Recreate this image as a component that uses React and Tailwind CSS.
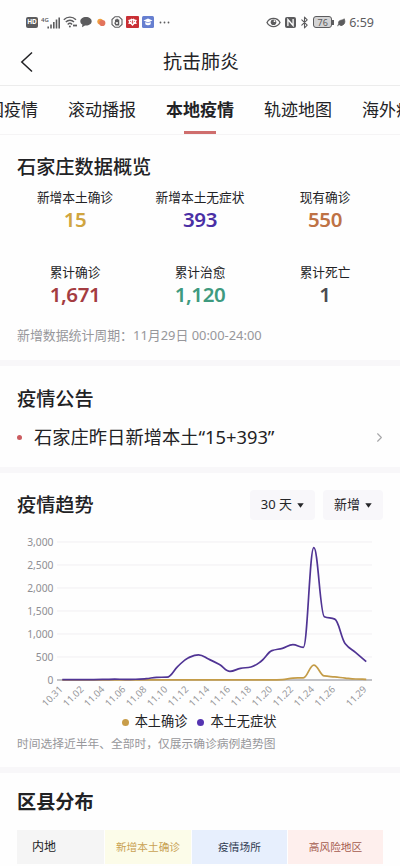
import React from 'react';
import { Bluetooth, Leaf, ChevronRight } from 'lucide-react';

const tabs = ['全国疫情', '滚动播报', '本地疫情', '轨迹地图', '海外疫情'];

const stats = [
  { label: '新增本土确诊', value: '15', color: 'text-[#d0a53f]' },
  { label: '新增本土无症状', value: '393', color: 'text-[#4a2fa5]' },
  { label: '现有确诊', value: '550', color: 'text-[#be7245]' },
  { label: '累计确诊', value: '1,671', color: 'text-[#a43c41]' },
  { label: '累计治愈', value: '1,120', color: 'text-[#3f9a7f]' },
  { label: '累计死亡', value: '1', color: 'text-[#4b4b50]' },
];

const asymptomatic = [
  8, 9, 10, 10, 12, 18, 15, 16, 28, 58, 62, 290, 480, 548, 450, 335, 188, 254,
  283, 413, 638, 688, 768, 710, 2877, 1377, 1323, 790, 594, 400,
];
const confirmed = [
  2, 2, 2, 2, 2, 2, 2, 2, 3, 3, 3, 3, 3, 3, 3, 3, 3, 3, 3, 3, 3, 8, 42, 48,
  325, 88, 68, 42, 22, 15,
];

const xLabels = [
  [0, '10.31'], [2, '11.02'], [4, '11.04'], [6, '11.06'], [8, '11.08'],
  [10, '11.10'], [12, '11.12'], [14, '11.14'], [16, '11.16'], [18, '11.18'],
  [20, '11.20'], [22, '11.22'], [24, '11.24'], [26, '11.26'], [29, '11.29'],
];
const yLabels = ['3,000', '2,500', '2,000', '1,500', '1,000', '500', '0'];

const px = (i) => 62.3 + i * 10.48;
const py = (v) => 150 - v * 0.046;

// monotone cubic, so the curve never overshoots a data point
const linePath = (data) => {
  const n = data.length;
  const d = data.slice(1).map((v, i) => v - data[i]);
  const m = data.map((_, i) => {
    if (i === 0) return d[0];
    if (i === n - 1) return d[n - 2];
    const a = d[i - 1];
    const b = d[i];
    return a * b <= 0 ? 0 : (2 * a * b) / (a + b);
  });
  let p = `M${px(0)},${py(data[0])}`;
  for (let i = 0; i < n - 1; i++) {
    p += `C${px(i + 0.4)},${py(data[i] + m[i] * 0.4)} ${px(i + 0.6)},${py(data[i + 1] - m[i + 1] * 0.4)} ${px(i + 1)},${py(data[i + 1])}`;
  }
  return p;
};

const StatusBar = () => (
  <div className="flex h-11 items-center justify-between pr-[26px] pl-[26px] text-[#5c5c5e]">
    <div className="flex items-center">
      <span className="flex h-[11px] w-[12px] items-center justify-center rounded-[2px] bg-[#5c5c5e] text-[6.5px] font-bold text-white">HD</span>
      <svg width="19" height="13" viewBox="0 0 19 13" className="ml-[3px]">
        <text x="0" y="5.5" fontSize="6" fontWeight="600" fill="#5c5c5e">4G</text>
        <path d="M7.2 12.5v-2M10 12.5v-4M12.8 12.5V6M15.5 12.5v-9M18.2 12.5v-11" stroke="#5c5c5e" strokeWidth="1.6" />
      </svg>
      <svg width="15" height="12" viewBox="0 0 15 12" className="ml-[3px]" fill="none" stroke="#5c5c5e" strokeWidth="1.4">
        <path d="M.8 3.7C4.300.3 9.500.3 13 3.700M2.800 6.100c2.400-2.400 5.900-2.400 8.200 0M4.700 8.400c1.300-1.300 3.100-1.300 4.400 0" />
        <circle cx="6.9" cy="10.4" r="1" fill="#5c5c5e" stroke="none" />
        <path d="M10 9.500h4" strokeWidth="1.8" />
      </svg>
      <svg width="12" height="12" viewBox="0 0 12 12" className="ml-[2px]" fill="#5c5c5e">
        <path d="M6 1C2.700 1 .3 2.900.3 5.300c0 1.400.8 2.600 2.100 3.300L2 11.300l3-1.800 1 .1c3.300 0 5.700-1.900 5.700-4.300S9.300 1 6 1z" />
      </svg>
      <svg width="9" height="9" viewBox="0 0 9 9" className="ml-[5px]">
        <circle cx="3.2" cy="3.6" r="2.9" fill="#f0a040" />
        <circle cx="5.3" cy="5" r="3.1" fill="#e2735c" />
      </svg>
      <svg width="12" height="12" viewBox="0 0 12 12" className="ml-[5px]" fill="none" stroke="#5c5c5e" strokeWidth="1.1">
        <path d="M4 .7h4L11 3.500v5L8 11.300H4L1 8.500v-5z" />
        <path d="M3.700 6.500 5 8.800h2.500V3.500M4.700 6.500v-3M6.100 6V2.700" strokeWidth="1.5" />
      </svg>
      <svg width="13" height="12" viewBox="0 0 13 12" className="ml-[3px]">
        <rect width="13" height="12" rx="1" fill="#c92f35" />
        <path d="m6.500 10-1.900-1.900-2.500-.3 1-1.900-1-2 2.200-.3 1.100-1.200 1.100.9 1.100-.9 1.100 1.200 2.200.3-1 2 1 1.900-2.500.3z" fill="#fff" />
        <path d="M6.500 4.300v3.500M4.100 5.200l1.300.8M8.900 5.200l-1.300.8" stroke="#c92f35" strokeWidth=".8" />
      </svg>
      <svg width="12" height="12" viewBox="0 0 12 12" className="ml-[3px]">
        <rect width="12" height="12" rx="1.5" fill="#667fd0" />
        <path d="m6 2.500 4.500 2L6 6.500l-4.500-2zM3.300 6v2.300c1.500 1.200 3.900 1.200 5.400 0V6L6 7.200z" fill="#fff" />
      </svg>
      <svg width="11" height="3" viewBox="0 0 11 3" className="ml-[5px]" fill="#5c5c5e">
        <circle cx="1.5" cy="1.5" r=".9" />
        <circle cx="5.5" cy="1.5" r=".9" />
        <circle cx="9.5" cy="1.5" r=".9" />
      </svg>
    </div>

    <div className="flex items-center">
      <svg width="15" height="11" viewBox="0 0 15 11" fill="none" stroke="#5c5c5e" strokeWidth="1.3">
        <path d="M1 5.500C3.800 0 11.200 0 14 5.500 11.200 11 3.800 11 1 5.500z" />
        <circle cx="7.5" cy="5.2" r="2.8" fill="#5c5c5e" stroke="none" />
        <circle cx="8.5" cy="4.2" r=".9" fill="#fff" stroke="none" />
      </svg>
      <svg width="11" height="11" viewBox="0 0 11 11" className="ml-[4px]">
        <rect width="11" height="11" rx="2" fill="#5c5c5e" />
        <path d="M2.900 9V2.500l5.200 6V2" fill="none" stroke="#fff" strokeWidth="1.3" />
      </svg>
      <Bluetooth size={13} strokeWidth={2} className="ml-[2px]" />
      <span className="ml-[2px] flex h-[12px] w-[19px] items-center justify-center rounded-[3px] border border-[#5c5c5e] bg-[#d4d4d5] text-[9px] leading-none">76</span>
      <span className="h-[5px] w-[2px] bg-[#5c5c5e]" />
      <Leaf size={9} fill="currentColor" className="ml-[3px]" />
      <span className="ml-[3px] pt-[2px] text-[12.5px] leading-none">6:59</span>
    </div>
  </div>
);

const TrendChart = () => (
  <svg width="400" height="182" viewBox="0 0 400 182" className="block">
    {yLabels.map((t, i) => (
      <g key={t}>
        <line x1="57" x2="372" y1={12 + i * 23} y2={12 + i * 23} stroke={t === '0' ? '#85858c' : '#f1eff2'} />
        <text x="53.5" y={16 + i * 23} textAnchor="end" fontSize="10.3" fill="#8e8e93">{t}</text>
      </g>
    ))}
    {xLabels.map(([i, t]) => (
      <text
        key={t}
        x={px(i) + 1}
        y="160"
        textAnchor="end"
        fontSize="9.5"
        fill="#97979b"
        transform={`rotate(-45 ${px(i) + 1} 160)`}
      >
        {t}
      </text>
    ))}
    <path d={linePath(confirmed)} fill="none" stroke="#c49c48" strokeWidth="1.7" />
    <path d={linePath(asymptomatic)} fill="none" stroke="#503494" strokeWidth="1.7" />
  </svg>
);

const Picker = ({ label, width }) => (
  <button className={`flex h-[30px] items-center justify-center gap-[5px] rounded bg-[#f8f7fa] text-[13px] text-[#252528] ${width}`}>
    {label}
    <svg width="7" height="5" viewBox="0 0 7 5"><path d="M.3.3h6.400L3.500 4.800z" fill="#252528" /></svg>
  </button>
);

const Divider = () => <div className="h-[6px] bg-[#f8f7f9]" />;

export default function App() {
  return (
    <div className="h-[866px] w-[400px] overflow-hidden bg-[#fefefe] font-['Noto_Sans','Noto_Sans_CJK_SC',sans-serif] text-[#222225]">
      <StatusBar />

      {/* Title bar */}
      <header className="grid h-[42px] grid-cols-[60px_1fr_60px] items-center border-b border-[#ececec] pb-[5px]">
        <svg width="13" height="22" viewBox="0 0 13 22" className="ml-5" fill="none" stroke="#222225" strokeWidth="1.5">
          <path d="M12 1.500 1.800 11 12 20.500" />
        </svg>
        <h1 className="pt-px pl-[2px] text-center text-[19px] leading-none">抗击肺炎</h1>
      </header>

      {/* Tabs */}
      <nav className="flex h-[49px] gap-[30px] border-b border-[#f5f4f5] pt-[13px]">
        {tabs.map((t, i) => (
          <div
            key={t}
            className={`flex w-[68px] shrink-0 flex-col items-center justify-between text-[17px] leading-[21px] whitespace-nowrap ${i === 0 ? '-ml-[30px]' : ''} ${i === 2 ? 'font-bold' : ''}`}
          >
            <span>{t}</span>
            {i === 2 && <span className="h-[3px] w-8 bg-[#cf6e6d]" />}
          </div>
        ))}
      </nav>

      {/* Overview */}
      <section className="h-[225px] pt-[20px]">
        <h2 className="pl-[17px] text-[19.2px] leading-6 font-medium">石家庄数据概览</h2>
        <div className="mt-[8px] grid grid-cols-3 px-[12.5px]">
          {stats.map((s) => (
            <div key={s.label} className="h-[74.5px] text-center">
              <p className="text-[12.7px] leading-5">{s.label}</p>
              <p className={`-mt-px text-[20.5px] leading-[26px] font-semibold tracking-[-0.4px] ${s.color}`}>{s.value}</p>
            </div>
          ))}
        </div>
        <p className="-mt-[10px] pl-[17px] text-[12.9px] leading-[18px] text-[#97979b]">新增数据统计周期：11月29日 00:00-24:00</p>
      </section>
      <Divider />

      {/* Notice */}
      <section className="h-[101px] px-[17px] pt-[21px]">
        <h2 className="text-[19.2px] leading-6 font-medium">疫情公告</h2>
        <div className="mt-[14px] flex h-6 items-center">
          <span className="h-[5px] w-[5px] rounded-full bg-[#cb5c60]" />
          <p className="ml-[12px] flex-1 text-[18.3px] leading-6 whitespace-nowrap">石家庄昨日新增本土“15+393”</p>
          <ChevronRight size={15} strokeWidth={1.8} className="-mr-[4px] text-[#a7a7a9]" />
        </div>
      </section>
      <Divider />

      {/* Trend */}
      <section className="h-[294px] pt-[17px]">
        <div className="flex items-center pr-[17px] pl-[17px]">
          <h2 className="flex-1 text-[19.2px] leading-6 font-medium">疫情趋势</h2>
          <Picker label="30 天" width="w-[65px]" />
          <span className="w-2" />
          <Picker label="新增" width="w-[60px]" />
        </div>
        <div className="mt-[10px]">
          <TrendChart />
        </div>
        <div className="flex h-[20px] items-center justify-center pr-[2px] text-[13.2px]">
          <span className="mr-[6px] h-[7px] w-[7px] rounded-full bg-[#c89d4a]" />
          本土确诊
          <span className="mr-[6px] ml-[10px] h-[7px] w-[7px] rounded-full bg-[#5534b1]" />
          本土无症状
        </div>
        <p className="mt-[2px] pl-[17px] text-[11.75px] leading-[18px] text-[#97979b]">时间选择近半年、全部时，仅展示确诊病例趋势图</p>
      </section>
      <Divider />

      {/* Districts */}
      <section className="px-[17px] pt-[17px]">
        <h2 className="text-[19.2px] leading-6 font-bold">区县分布</h2>
        <div className="mt-[16px] grid h-[34px] grid-cols-[87px_86px_95px_95px] gap-px text-[10.7px]">
          <div className="flex items-center bg-[#f5f5f5] pl-[15px] text-[12px]">内地</div>
          <div className="flex items-center justify-center bg-[#fcfce9] text-[#c9a253]">新增本土确诊</div>
          <div className="flex items-center justify-center bg-[#e7effd] text-[#2f3b51]">疫情场所</div>
          <div className="flex items-center justify-center bg-[#feefed] text-[#a55b4e]">高风险地区</div>
        </div>
      </section>
    </div>
  );
}
